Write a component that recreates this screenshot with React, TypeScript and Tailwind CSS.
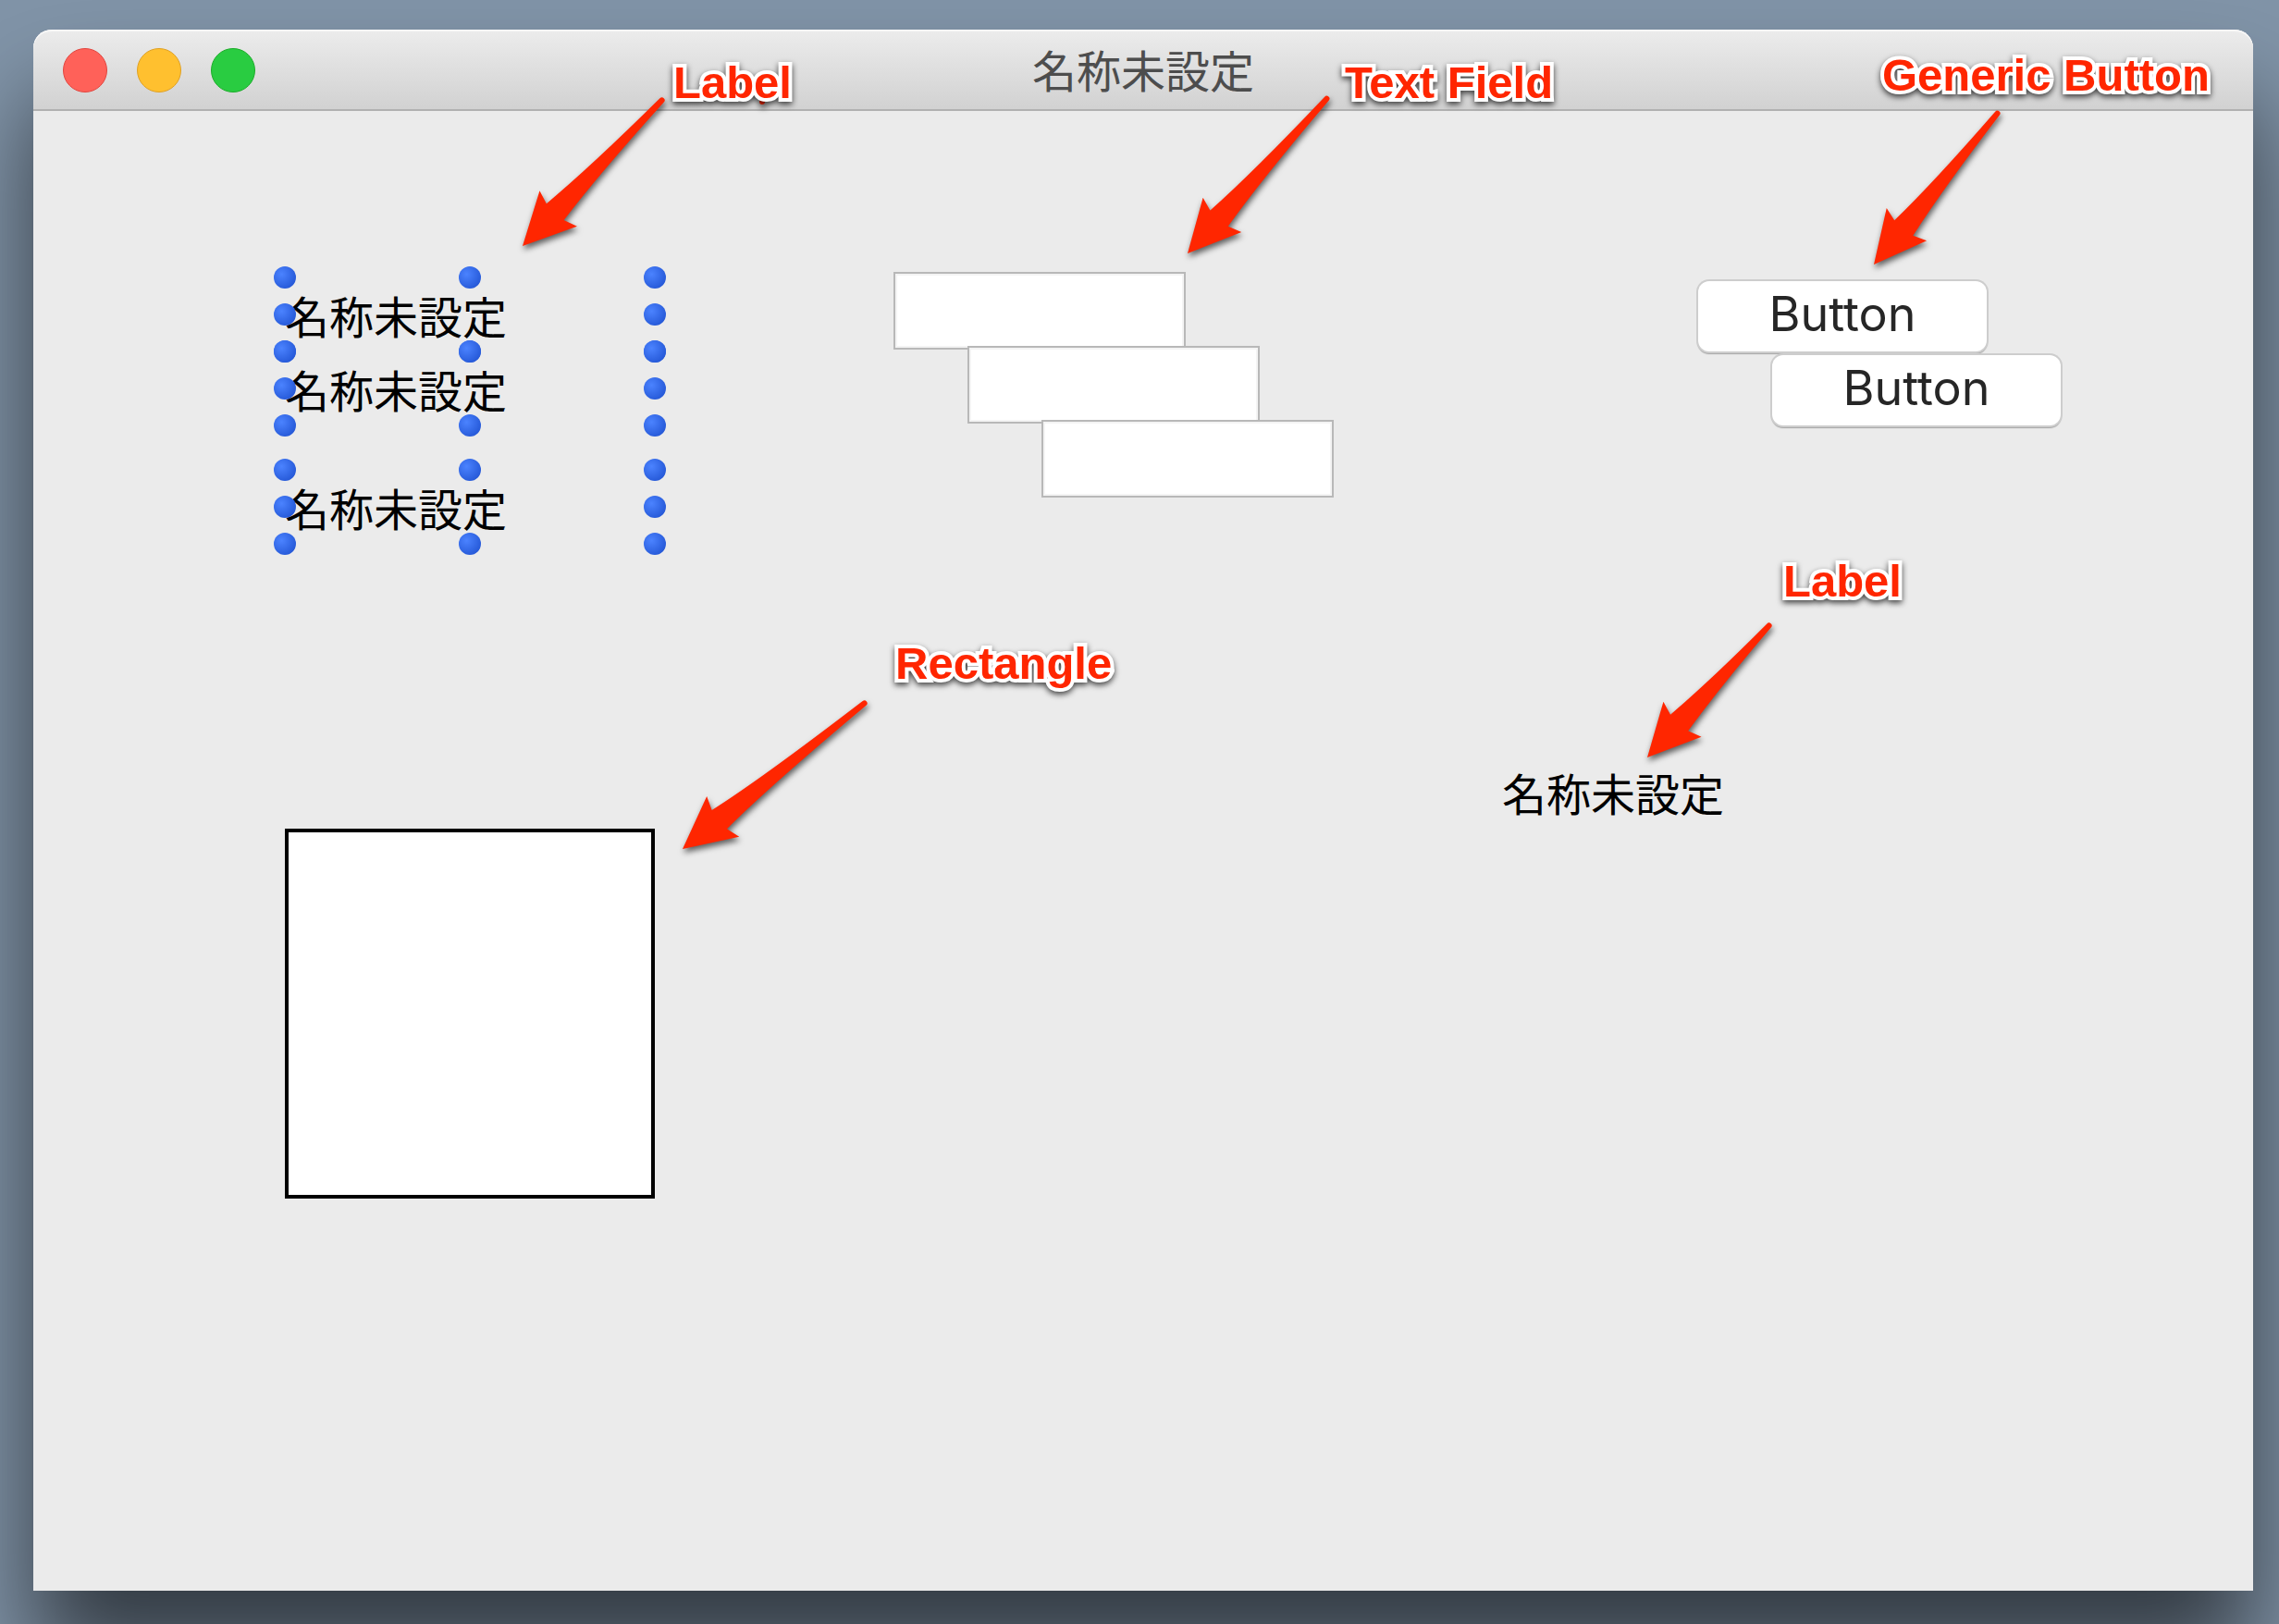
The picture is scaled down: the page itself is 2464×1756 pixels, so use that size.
const ANNOTATION_RED = '#ff2600';
const UNTITLED = '名称未設定';

type Point = { x: number; y: number };

/** Tapered arrow with a fixed-size head, drawn from tail to tip. */
function Arrow({ tip, tail }: { tip: Point; tail: Point }) {
  const dx = tail.x - tip.x;
  const dy = tail.y - tip.y;
  const length = Math.round(Math.hypot(dx, dy));
  const angle = (Math.atan2(dy, dx) * 180) / Math.PI;
  const end = length - 1;
  const d = `M0 0 L56 -28 L51 -13 Q112 -6 ${end} -3 A3 3 0 0 1 ${end} 3 Q112 6 51 13 L56 28 Z`;
  return <path d={d} fill={ANNOTATION_RED} transform={`translate(${tip.x} ${tip.y}) rotate(${angle})`} />;
}

const arrows: { tip: Point; tail: Point }[] = [
  { tip: { x: 529, y: 234 }, tail: { x: 680, y: 76 } },
  { tip: { x: 1248, y: 242 }, tail: { x: 1399, y: 74 } },
  { tip: { x: 1990, y: 254 }, tail: { x: 2124, y: 90 } },
  { tip: { x: 1745, y: 787 }, tail: { x: 1877, y: 644 } },
  { tip: { x: 702, y: 886 }, tail: { x: 899, y: 728 } },
];

const captions = [
  { text: 'Label', place: 'left-[692px] top-[33px]' },
  { text: 'Text Field', place: 'left-[1418px] top-[33px]' },
  { text: 'Generic Button', place: 'left-[1999px] top-[25px]' },
  { text: 'Rectangle', place: 'left-[932px] top-[661px]' },
  { text: 'Label', place: 'left-[1892px] top-[572px]' },
];

function Annotations() {
  return (
    <div className="pointer-events-none absolute inset-0">
      <svg
        className="absolute inset-0 h-full w-full overflow-visible [filter:drop-shadow(1px_4px_3px_rgba(0,0,0,0.6))]"
        aria-hidden="true"
      >
        <circle cx="788" cy="78" r="3" fill={ANNOTATION_RED} />
        {arrows.map((a) => (
          <Arrow key={`${a.tip.x}-${a.tip.y}`} {...a} />
        ))}
      </svg>
      {captions.map((c) => (
        <p
          key={c.place}
          className={`absolute whitespace-nowrap font-['Liberation_Sans',sans-serif] text-[49px] leading-[48px] font-bold text-[#ff2600] [paint-order:stroke_fill] [-webkit-text-stroke:8px_white] [stroke-linejoin:round] [filter:drop-shadow(0_3px_3px_rgba(0,0,0,0.7))] ${c.place}`}
        >
          {c.text}
        </p>
      ))}
    </div>
  );
}

const handlePlaces = [
  'left-0 top-0',
  'left-1/2 top-0',
  'left-full top-0',
  'left-0 top-1/2',
  'left-full top-1/2',
  'left-0 top-full',
  'left-1/2 top-full',
  'left-full top-full',
];

function SelectedLabel({ place }: { place: string }) {
  return (
    <div className={`absolute h-20 w-[400px] ${place}`}>
      <span className="block pt-1 text-[48px] leading-[72px] text-black">{UNTITLED}</span>
      {handlePlaces.map((p) => (
        <span
          key={p}
          className={`absolute size-6 -translate-x-1/2 -translate-y-1/2 rounded-full bg-[radial-gradient(circle_at_35%_35%,#4b83ff,#2457d6_80%)] ${p}`}
        />
      ))}
    </div>
  );
}

function Field({ place, label }: { place: string; label: string }) {
  return (
    <input
      type="text"
      aria-label={label}
      className={`absolute h-[84px] w-[316px] border-2 border-[#b8b8b8] bg-white px-3 text-[48px] shadow-[inset_0_0_0_2px_#f4f4f4] outline-none ${place}`}
    />
  );
}

function PushButton({ place }: { place: string }) {
  return (
    <button
      type="button"
      className={`absolute h-[76px] w-[312px] rounded-xl bg-white pb-1 font-[Inter,sans-serif] text-[52px] leading-[72px] text-[#262626] shadow-[0_0_0_2px_#cdcdcd,0_2px_1px_1px_#a4a4a4] ${place}`}
    >
      Button
    </button>
  );
}

const trafficLights = [
  { name: 'Close', color: 'border-[#e2463f] bg-[#ff6159]' },
  { name: 'Minimize', color: 'border-[#e0a123] bg-[#ffc02f]' },
  { name: 'Zoom', color: 'border-[#1dad2b] bg-[#29cc41]' },
];

export default function App() {
  return (
    <div className="flex min-h-screen overflow-hidden bg-[#8194a8] pt-8 pr-7 pb-9 pl-9 font-['Noto_Sans_CJK_JP',sans-serif]">
      <main className="relative flex flex-1 flex-col rounded-t-[20px] bg-[#ebebeb] shadow-[0_76px_104px_rgba(0,0,0,0.6)]">
        <header className="grid h-[88px] grid-cols-[1fr_auto_1fr] items-center rounded-t-[20px] bg-linear-to-b from-[#ececec] to-[#d1d1d1] px-8 shadow-[inset_0_2px_0_#f6f6f6,inset_0_-2px_0_#b1b1b1]">
          <div className="flex gap-8">
            {trafficLights.map((t) => (
              <button key={t.name} type="button" aria-label={t.name} className={`size-12 rounded-full border ${t.color}`} />
            ))}
          </div>
          <h1 className="pb-1 text-[48px] leading-[72px] text-[#4d4d4d]">{UNTITLED}</h1>
        </header>
        <section className="relative flex-1" aria-label="Canvas">
          <SelectedLabel place="left-[272px] top-[180px]" />
          <SelectedLabel place="left-[272px] top-[260px]" />
          <SelectedLabel place="left-[272px] top-[388px]" />

          <Field label="Text field 1" place="left-[930px] top-[174px]" />
          <Field label="Text field 2" place="left-[1010px] top-[254px]" />
          <Field label="Text field 3" place="left-[1090px] top-[334px]" />

          <PushButton place="left-[1800px] top-[184px]" />
          <PushButton place="left-[1880px] top-[264px]" />

          <span className="absolute top-[696px] left-[1588px] pt-1 text-[48px] leading-[72px] text-black">{UNTITLED}</span>

          <div className="absolute top-[776px] left-[272px] size-[400px] border-4 border-black bg-white" />
        </section>
        <Annotations />
      </main>
    </div>
  );
}
